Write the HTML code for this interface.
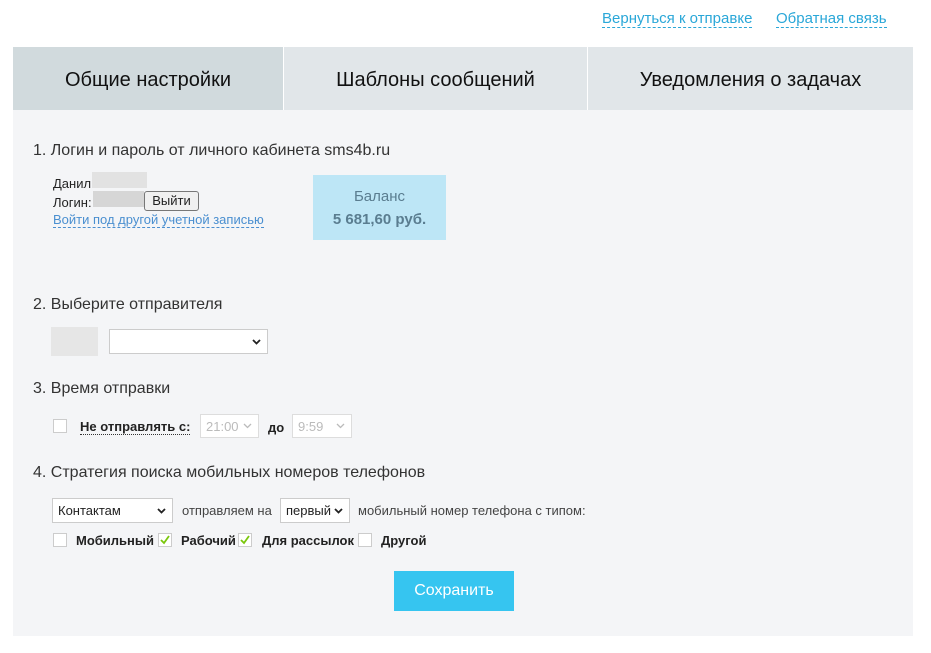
<!DOCTYPE html>
<html><head><meta charset="utf-8"><style>
body{margin:0;width:931px;height:653px;background:#fff;font-family:"Liberation Sans",sans-serif;position:relative;color:#222;overflow:hidden}
.a{position:absolute;white-space:nowrap}
.lnk{color:#2aa7d8;font-size:15px;border-bottom:1px dashed #2aa7d8;line-height:17px}
.tab{position:absolute;top:47px;height:63px;background:#e1e6e9;font-size:20px;color:#111;display:flex;align-items:center;justify-content:center;padding-top:3px;box-sizing:border-box}
.panel{position:absolute;left:13px;top:110px;width:900px;height:526px;background:#f4f5f7}
h3{position:absolute;margin:0;font-weight:normal;font-size:16px;color:#333;white-space:nowrap}
.s{font-size:13px;color:#222}
.cb{position:absolute;width:12px;height:12px;border:1px solid #ccc;background:#fff}
.sel{position:absolute;background:#fff;border:1px solid #ccc;font-size:13px;box-sizing:border-box;padding-left:5px;display:flex;align-items:center}
.chev{position:absolute;right:6px;top:50%;margin-top:-3px;width:9px;height:6px}
.blur{position:absolute;background:#ddd}
</style></head><body>
<span class="a lnk" style="left:602px;top:10px">Вернуться к отправке</span>
<span class="a lnk" style="left:776px;top:10px">Обратная связь</span>
<div class="tab" style="left:13px;width:270px;background:#d1dadd">Общие настройки</div>
<div class="tab" style="left:284px;width:303px">Шаблоны сообщений</div>
<div class="tab" style="left:588px;width:325px">Уведомления о задачах</div>
<div class="panel">
<h3 style="left:20px;top:32px">1. Логин и пароль от личного кабинета sms4b.ru</h3>
<span class="a s" style="left:40px;top:66px">Данил</span>
<div class="blur" style="left:79px;top:62px;width:55px;height:16px;background:#e2e2e2"></div>
<span class="a s" style="left:40px;top:85px">Логин:</span>
<div class="blur" style="left:80px;top:81px;width:51px;height:16px;background:#d6d6d6"></div>
<div class="a" style="left:131px;top:81px;width:53px;height:18px;border:1px solid #777;border-radius:3px;background:#f0f0f0;font-size:13px;text-align:center;line-height:18px">Выйти</div>
<span class="a" style="left:40px;top:102px;font-size:13px;color:#4a8fd0;border-bottom:1px dashed #4a8fd0;line-height:15px">Войти под другой учетной записью</span>
<div class="a" style="left:300px;top:65px;width:133px;height:65px;background:#bde6f6;text-align:center;color:#5a7d90">
<div style="font-size:15px;margin-top:13px">Баланс</div><div style="font-size:15px;font-weight:bold;margin-top:6px">5 681,60 руб.</div></div>
<h3 style="left:20px;top:186px">2. Выберите отправителя</h3>
<div class="blur" style="left:38px;top:217px;width:47px;height:29px;background:#e6e6e6"></div>
<div class="sel" style="left:96px;top:219px;width:159px;height:25px"><svg class="chev" viewBox="0 0 9 6"><path d="M1 1l3.5 3.5L8 1" stroke="#222" stroke-width="1.8" fill="none"/></svg></div>
<h3 style="left:20px;top:270px">3. Время отправки</h3>
<div class="cb" style="left:40px;top:309px"></div>
<span class="a s" style="left:67px;top:309px;font-weight:bold;border-bottom:1px dotted #333;line-height:15px">Не отправлять с:</span>
<div class="sel" style="left:187px;top:304px;width:59px;height:24px;color:#bbb;border-color:#ddd">21:00<svg class="chev" viewBox="0 0 9 6"><path d="M1 1l3.5 3.5L8 1" stroke="#bbb" stroke-width="1.3" fill="none"/></svg></div>
<span class="a s" style="left:255px;top:310px;font-weight:bold">до</span>
<div class="sel" style="left:279px;top:304px;width:60px;height:24px;color:#bbb;border-color:#ddd">9:59<svg class="chev" viewBox="0 0 9 6"><path d="M1 1l3.5 3.5L8 1" stroke="#bbb" stroke-width="1.3" fill="none"/></svg></div>
<h3 style="left:20px;top:354px">4. Стратегия поиска мобильных номеров телефонов</h3>
<div class="sel" style="left:39px;top:388px;width:121px;height:25px">Контактам<svg class="chev" viewBox="0 0 9 6"><path d="M1 1l3.5 3.5L8 1" stroke="#222" stroke-width="1.8" fill="none"/></svg></div>
<span class="a s" style="left:169px;top:393px;color:#444">отправляем на</span>
<div class="sel" style="left:267px;top:388px;width:70px;height:25px">первый<svg class="chev" viewBox="0 0 9 6"><path d="M1 1l3.5 3.5L8 1" stroke="#222" stroke-width="1.8" fill="none"/></svg></div>
<span class="a s" style="left:345px;top:393px;color:#444">мобильный номер телефона с типом:</span>
<div class="cb" style="left:40px;top:423px"></div>
<span class="a s" style="left:63px;top:423px;font-weight:bold">Мобильный</span>
<div class="cb" style="left:145px;top:423px"><svg style="position:absolute;left:1px;top:1px" width="10" height="10" viewBox="0 0 10 10"><path d="M1 5l3 3 5-7" stroke="#7ac70c" stroke-width="1.8" fill="none"/></svg></div>
<span class="a s" style="left:168px;top:423px;font-weight:bold">Рабочий</span>
<div class="cb" style="left:225px;top:423px"><svg style="position:absolute;left:1px;top:1px" width="10" height="10" viewBox="0 0 10 10"><path d="M1 5l3 3 5-7" stroke="#7ac70c" stroke-width="1.8" fill="none"/></svg></div>
<span class="a s" style="left:249px;top:423px;font-weight:bold">Для рассылок</span>
<div class="cb" style="left:345px;top:423px"></div>
<span class="a s" style="left:368px;top:423px;font-weight:bold">Другой</span>
<div class="a" style="left:381px;top:461px;width:120px;height:40px;background:#36c5f0;color:#fff;font-size:16px;text-align:center;line-height:40px">Сохранить</div>
</div>
</body></html>
